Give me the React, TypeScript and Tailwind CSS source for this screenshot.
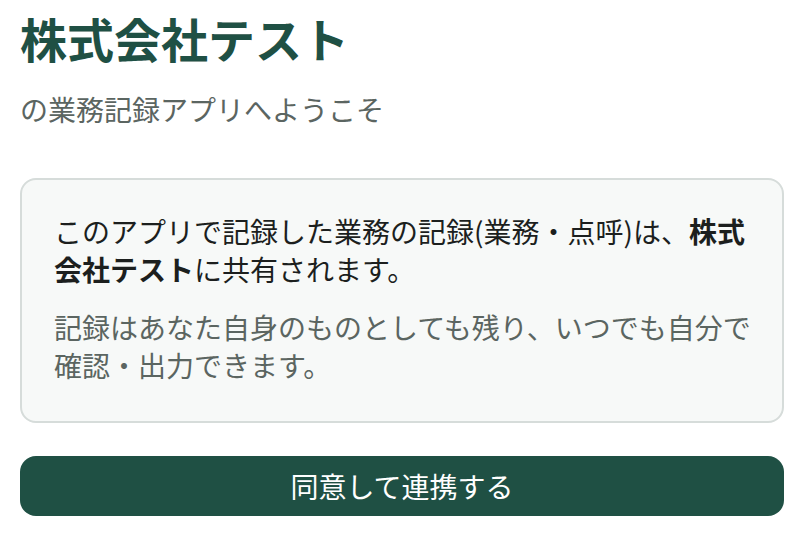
export default function App() {
  return (
    <div
      className="min-h-screen bg-white px-5 pt-[10px]"
      style={{ fontFamily: '"Noto Sans CJK JP", "Noto Sans", sans-serif' }}
    >
      <h1 className="text-[47px] font-bold leading-[56px] text-[#1f5044]">株式会社テスト</h1>
      <p className="mt-[24px] text-[28px] leading-[38px] text-[#5b6561]">の業務記録アプリへようこそ</p>

      <div className="mt-[50px] rounded-2xl border-2 border-[#d6dcda] bg-[#f7f9f8] pb-[37px] pl-8 pr-6 pt-[32px]">
        <p className="text-[28px] leading-[38px] text-[#1c1f1e]">
          このアプリで記録した業務の記録(業務・点呼)は、<span className="font-bold">株式会社テスト</span>に共有されます。
        </p>
        <p className="mt-[20px] text-[28px] leading-[38px] text-[#5b6561]">
          記録はあなた自身のものとしても残り、いつでも自分で確認・出力できます。
        </p>
      </div>

      <button className="mt-[33px] flex h-[60px] w-full items-center justify-center rounded-2xl bg-[#1f5044] text-[28px] text-white">
        同意して連携する
      </button>
    </div>
  );
}
